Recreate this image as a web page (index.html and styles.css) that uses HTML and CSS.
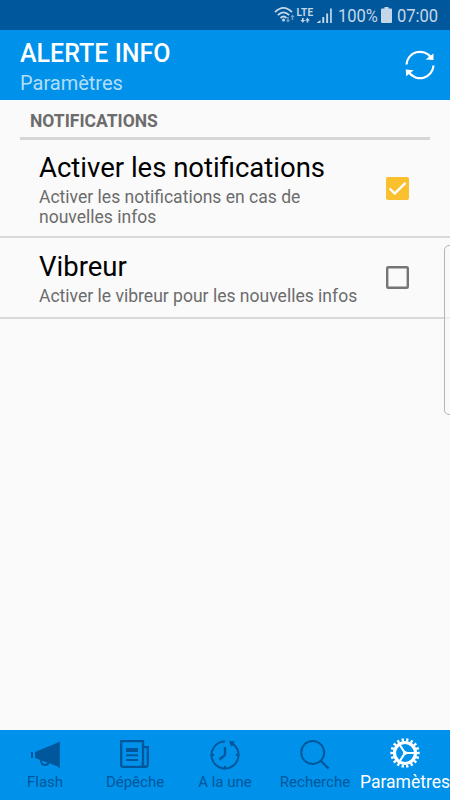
FILE: index.html
```html
<!DOCTYPE html>
<html lang="fr">
<head>
    <meta charset="UTF-8">
    <meta name="viewport" content="width=device-width, initial-scale=1.0">
    <title>Alerte Info - Paramètres</title>
    <link rel="stylesheet" href="styles.css">
</head>
<body>
    <div class="status-bar">
        <svg class="status-icons" width="60" height="20" viewBox="0 0 60 20">
            <g fill="none" stroke="#c3d7e8" stroke-width="1.8">
                <path d="M1 6.200Q9.500 -2.500 18 6.200"/>
                <path d="M3.800 9.200Q9.500 3.500 15.200 9.200"/>
                <path d="M6.500 12Q9.500 9 12.500 12"/>
            </g>
            <circle cx="9.500" cy="14" r="1.500" fill="#c3d7e8"/>
            <path d="M13.300 11v3h-1.500l2.200 2.500 2.200-2.500h-1.500v-3zM17.700 14v-3h-1.400l2.200-2.500 2.200 2.500h-1.500v3z" fill="#6f9fc8"/>
            <path d="M28 12v2h-1.600l2.400 2.800 2.400-2.800h-1.600v-2zM32.700 16.500v-2h-1.600l2.400-2.800 2.400 2.800h-1.600v2z" fill="#c3d7e8"/>
            <path d="M43 17v-.5l3.500-2.500v3zM48.300 17v-6h1.900v6zM52.200 17V7.500h1.900V17zM56.100 17V2.500h1.700V17z" fill="#c3d7e8"/>
            <text class="lte" x="22.500" y="9.500" textLength="16.500">LTE</text>
        </svg>
        <span class="percent">100%</span>
        <svg class="battery" width="11" height="16" viewBox="0 0 11 16">
            <path d="M3.500 0h4v1.500H10q1 0 1 1V15q0 1-1 1H1q-1 0-1-1V2.500q0-1 1-1h2.500z" fill="#c3d7e8"/>
        </svg>
        <span class="time">07:00</span>
    </div>

    <header class="toolbar">
        <div>
            <h1>ALERTE INFO</h1>
            <p class="subtitle">Paramètres</p>
        </div>
        <svg class="refresh" width="32" height="32" viewBox="0 0 32 32">
            <g fill="none" stroke="#fff" stroke-width="2.200">
                <path d="M2.500 15.500A13.500 13.500 0 0 1 27 8.500"/>
                <path d="M29.500 16.500A13.500 13.500 0 0 1 5 23.500"/>
            </g>
            <path d="M29.500 4.500v6.600l-8-.5zM2.200 27.300L1.700 20.500l8 .8z" fill="#fff"/>
        </svg>
    </header>

    <main>
        <h2>NOTIFICATIONS</h2>
        <label class="pref">
            <div class="pref-text">
                <div class="pref-title">Activer les notifications</div>
                <div class="pref-summary">Activer les notifications en cas de nouvelles infos</div>
            </div>
            <svg class="checkbox" width="23" height="23" viewBox="0 0 23 23">
                <rect width="23" height="23" rx="2" fill="#fbc02d"/>
                <path d="M3.700 11.500l5 5L19.500 5.800" fill="none" stroke="#fff" stroke-width="2.400"/>
            </svg>
        </label>
        <label class="pref pref-short">
            <div class="pref-text">
                <div class="pref-title">Vibreur</div>
                <div class="pref-summary">Activer le vibreur pour les nouvelles infos</div>
            </div>
            <svg class="checkbox" width="23" height="23" viewBox="0 0 23 23">
                <rect x="1.200" y="1.200" width="20.600" height="20.600" rx="1" fill="none" stroke="#757575" stroke-width="2.400"/>
            </svg>
        </label>
        <div class="edge-handle"></div>
    </main>

    <nav>
        <div class="tab">
            <svg width="32" height="32" viewBox="0 0 32 32">
                <path d="M2 13h2v6H2zM6 13L29 3.500l1-.8h.8V29H30l-1-1.500L6 19z" fill="currentColor"/>
                <path d="M11.500 20.500l1.200 3.500q.5 1.700 2 1.700h2.500q2 0 2-2.500" fill="none" stroke="currentColor" stroke-width="2"/>
            </svg>
            <span>Flash</span>
        </div>
        <div class="tab">
            <svg width="32" height="32" viewBox="0 0 32 32">
                <g fill="none" stroke="currentColor" stroke-width="2.300">
                    <path d="M24 27.800V2.200H2.200V26q0 1.800 1.800 1.800h22.500q2.300 0 2.300-2.300V8.200h-4.500"/>
                    <path d="M23.500 24q0 3.800 3 3.800"/>
                </g>
                <path d="M7 9h12v4H7zM7 15.200h12v2H7zM7 20h12v2H7z" fill="currentColor"/>
            </svg>
            <span>Dépêche</span>
        </div>
        <div class="tab">
            <svg width="32" height="32" viewBox="0 0 32 32">
                <g fill="none" stroke="currentColor" stroke-width="2">
                    <path d="M16 2.500A13.500 13.500 0 1 0 24.500 5.500"/>
                    <path d="M16 8v8l-5.500 4.500" stroke-width="2.300"/>
                    <path d="M3 16h2M27 16h2M16 27v2"/>
                </g>
                <path d="M20 2l5.500.2-.8 2 1 .8-1.500 2-1.300-.8-.7 1.600z" fill="currentColor"/>
            </svg>
            <span>A la une</span>
        </div>
        <div class="tab">
            <svg width="32" height="32" viewBox="0 0 32 32">
                <circle cx="13.700" cy="13.500" r="11.500" fill="none" stroke="currentColor" stroke-width="2"/>
                <path d="M21.500 21.500l8 8" stroke="currentColor" stroke-width="2.300"/>
            </svg>
            <span>Recherche</span>
        </div>
        <div class="tab active">
            <svg width="32" height="32" viewBox="0 0 32 32">
                <g fill="none" stroke="currentColor">
                    <circle cx="16" cy="16" r="13.200" pathLength="36" stroke-width="3" stroke-dasharray="1 1" stroke-dashoffset=".5"/>
                    <circle cx="16" cy="16" r="10.500" stroke-width="3.200"/>
                    <path d="M16 16h10M16 16l-5.500-8.500M16 16l-5.500 8.500" stroke-width="2.200"/>
                </g>
                <circle cx="16" cy="16" r="2" fill="currentColor"/>
            </svg>
            <span>Paramètres</span>
        </div>
    </nav>
</body>
</html>
```
FILE: styles.css
```css
* {
    box-sizing: border-box;
}
body {
    font-family: Roboto, sans-serif;
    background-color: #fafafa;
    margin: 0;
    height: 100vh;
    display: flex;
    flex-direction: column;
    overflow: hidden;
}
h1, h2, p {
    margin: 0;
}
svg {
    display: block;
    flex: none;
}
.status-bar {
    height: 30px;
    flex: none;
    display: flex;
    align-items: center;
    justify-content: flex-end;
    padding-right: 12px;
    background-color: #01579b;
    color: #c3d7e8;
    font-size: 19px;
}
.status-icons {
    margin: 2px 4px 0 0;
}
.lte {
    font-size: 10px;
    font-weight: 700;
    fill: #c3d7e8;
}
.battery {
    margin: 0 5px 0 4px;
}
.percent, .time {
    width: 39px;
    line-height: 30px;
    padding-top: 2px;
    transform: scaleX(0.87);
    transform-origin: left;
}
.time {
    width: 41px;
}
.toolbar {
    height: 70px;
    flex: none;
    display: flex;
    justify-content: space-between;
    align-items: center;
    padding: 0 14px 0 20px;
    background-color: #0091ea;
    color: #fff;
}
h1 {
    font-size: 25px;
    font-weight: 500;
    line-height: 30px;
    padding-top: 7px;
}
.subtitle {
    font-size: 20px;
    line-height: 29px;
    color: #b3def9;
}
main {
    flex: 1;
    position: relative;
}
h2 {
    height: 40px;
    margin: 0 20px;
    padding-left: 10px;
    border-bottom: 3px solid #d6d6d6;
    font-size: 17.500px;
    font-weight: 700;
    line-height: 42px;
    color: #6c6c6c;
}
.pref {
    display: flex;
    align-items: center;
    justify-content: space-between;
    height: 98px;
    padding: 0 41px 0 39px;
    border-bottom: 2px solid #d9d9d9;
}
.pref-short {
    height: 81px;
}
.pref-text {
    width: 325px;
}
.pref-title {
    font-size: 27.500px;
    line-height: 36px;
    color: #000;
}
.pref-summary {
    max-width: 325px;
    font-size: 17.550px;
    line-height: 20px;
    padding-top: 1px;
    color: #6c6c6c;
}
.pref:not(.pref-short) .pref-summary {
    max-width: 300px;
}
.edge-handle {
    position: absolute;
    top: 145px;
    right: -4px;
    width: 10px;
    height: 170px;
    border: 1px solid #b5b5b5;
    border-radius: 6px;
    background-color: rgba(250, 250, 250, 0.6);
}
nav {
    height: 70px;
    flex: none;
    display: grid;
    grid-template-columns: repeat(5, 90px);
    background-color: #0091ea;
}
.tab {
    display: flex;
    flex-direction: column;
    align-items: center;
    padding-top: 9px;
    color: #01579b;
    font-size: 15px;
    line-height: 23px;
}
.active {
    padding-top: 7px;
    color: #fff;
    font-size: 17.500px;
    line-height: 26px;
}
```
